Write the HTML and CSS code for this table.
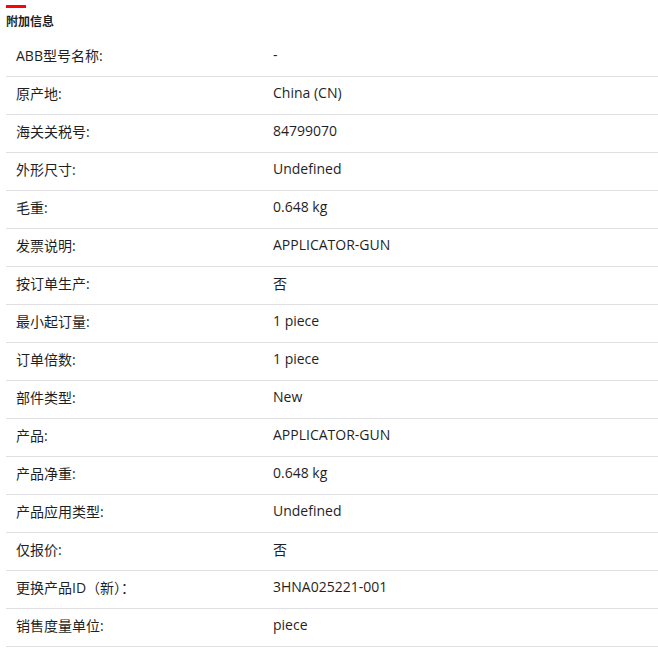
FILE: index.html
```html
<!DOCTYPE html>
<html lang="zh">
<head>
<meta charset="utf-8">
<link rel="stylesheet" href="styles.css">
</head>
<body>
<section class="info">
  <div class="accent"></div>
  <h2 class="title">附加信息</h2>
  <div class="table">
    <div class="row"><div class="label">ABB型号名称:</div><div class="value">-</div></div>
    <div class="row"><div class="label">原产地:</div><div class="value">China (CN)</div></div>
    <div class="row"><div class="label">海关关税号:</div><div class="value">84799070</div></div>
    <div class="row"><div class="label">外形尺寸:</div><div class="value">Undefined</div></div>
    <div class="row"><div class="label">毛重:</div><div class="value">0.648 kg</div></div>
    <div class="row"><div class="label">发票说明:</div><div class="value">APPLICATOR-GUN</div></div>
    <div class="row"><div class="label">按订单生产:</div><div class="value">否</div></div>
    <div class="row"><div class="label">最小起订量:</div><div class="value">1 piece</div></div>
    <div class="row"><div class="label">订单倍数:</div><div class="value">1 piece</div></div>
    <div class="row"><div class="label">部件类型:</div><div class="value">New</div></div>
    <div class="row"><div class="label">产品:</div><div class="value">APPLICATOR-GUN</div></div>
    <div class="row"><div class="label">产品净重:</div><div class="value">0.648 kg</div></div>
    <div class="row"><div class="label">产品应用类型:</div><div class="value">Undefined</div></div>
    <div class="row"><div class="label">仅报价:</div><div class="value">否</div></div>
    <div class="row"><div class="label">更换产品ID（新）：</div><div class="value">3HNA025221-001</div></div>
    <div class="row"><div class="label">销售度量单位:</div><div class="value">piece</div></div>
  </div>
</section>
</body>
</html>
```

FILE: styles.css
```css
html, body {
  margin: 0;
  padding: 0;
  background: #ffffff;
}
body {
  font-family: "Open Sans", "Noto Sans CJK SC", sans-serif;
  color: #1f1f1f;
}
.info {
  padding: 5px 0 0 6px;
}
.accent {
  width: 20px;
  height: 3px;
  background: #ff000f;
}
.title {
  margin: 0;
  padding-top: 5px;
  height: 27px;
  box-sizing: border-box;
  font-size: 12px;
  line-height: 18px;
  font-weight: 700;
  color: #1f1f1f;
}
.table {
  display: flex;
  flex-direction: column;
  padding-top: 4px;
}
.row {
  display: grid;
  grid-template-columns: 267px 1fr;
  height: 37px;
  align-items: center;
  border-bottom: 1px solid #dedee3;
  font-size: 14px;
}
.label {
  padding-left: 10px;
  padding-bottom: 6px;
}
.value {
  padding-bottom: 6px;
}
```
